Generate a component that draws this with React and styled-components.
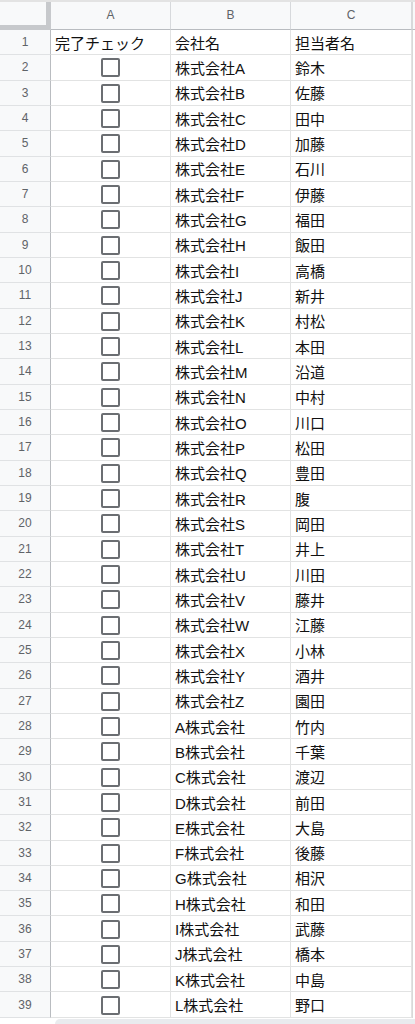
import React from "react";
import styled, { createGlobalStyle } from "styled-components";

const Global = createGlobalStyle`
  html, body { margin: 0; padding: 0; background: #fff; overflow: hidden; }
  body { font-family: "Liberation Sans", "Noto Sans CJK JP", sans-serif; }
`;

const Sheet = styled.div`
  width: 415px;
  height: 1024px;
  display: flex;
  flex-direction: column;
  overflow: hidden;
  border-top: 2px solid #e3e3e3;
  box-sizing: border-box;
`;

const Row = styled.div`
  display: grid;
  grid-template-columns: 51px 120px 120px 121px 1fr;
  height: ${(p) => (p.$header ? "28px" : "25.333px")};
  flex: none;
`;

const Corner = styled.div`
  background: #f8f9fa;
  border-right: 5px solid #c7c9cc;
  border-bottom: 5px solid #c7c9cc;
  box-sizing: border-box;
`;

const ColHead = styled.div`
  background: #f8f9fa;
  border-right: 1px solid #d7d9dc;
  border-bottom: 1px solid #b9bcc0;
  box-sizing: border-box;
  display: flex;
  align-items: center;
  justify-content: center;
  font-size: 12px;
  color: #5f6368;
  padding-bottom: 2px;
`;

const RowHead = styled.div`
  background: #f8f9fa;
  border-right: 1px solid #b9bcc0;
  border-bottom: 1px solid #e0e2e4;
  box-sizing: border-box;
  display: flex;
  align-items: center;
  justify-content: center;
  font-size: 12px;
  color: #5f6368;
`;

const Cell = styled.div`
  border-right: 1px solid #e2e3e3;
  border-bottom: 1px solid #e2e3e3;
  box-sizing: border-box;
  display: flex;
  align-items: center;
  justify-content: ${(p) => (p.$center ? "center" : "flex-start")};
  padding-left: ${(p) => (p.$center ? "0" : "4px")};
  font-family: "Liberation Sans", "Noto Sans CJK JP", sans-serif;
  font-size: 15px;
  color: #111;
  white-space: nowrap;
  overflow: hidden;
`;

const Rest = styled.div`
  background: ${(p) => (p.$header ? "#f8f9fa" : "#fff")};
  border-left: 1px solid #d9d9d9;
  border-bottom: ${(p) => (p.$header ? "1px solid #b9bcc0" : "none")};
  box-sizing: border-box;
`;

const Box = styled.span`
  width: 15px;
  height: 15px;
  border: 2px solid #6b6e72;
  border-radius: 2px;
  box-sizing: content-box;
  margin-top: 1px;
`;

const Footer = styled.div`
  flex: 1;
  display: flex;
  padding-left: 55px;
  padding-top: 1px;
`;

const Scroll = styled.div`
  flex: 1;
  background: #e9ebee;
  border-top-left-radius: 6px;
`;

const names1 = ["鈴木","佐藤","田中","加藤","石川","伊藤","福田","飯田","高橋","新井","村松","本田","沿道","中村","川口","松田","豊田","腹","岡田","井上","川田","藤井","江藤","小林","酒井","園田"];
const names2 = ["竹内","千葉","渡辺","前田","大島","後藤","相沢","和田","武藤","橋本","中島","野口"];
const letters = "ABCDEFGHIJKLMNOPQRSTUVWXYZ";

const data = [
  ...names1.map((n, i) => ({ company: `株式会社${letters[i]}`, person: n })),
  ...names2.map((n, i) => ({ company: `${letters[i]}株式会社`, person: n })),
];

export default function App() {
  return (
    <>
      <Global />
      <Sheet>
        <Row $header>
          <Corner />
          <ColHead>A</ColHead>
          <ColHead>B</ColHead>
          <ColHead>C</ColHead>
          <Rest $header />
        </Row>
        <Row>
          <RowHead>1</RowHead>
          <Cell>完了チェック</Cell>
          <Cell>会社名</Cell>
          <Cell>担当者名</Cell>
          <Rest />
        </Row>
        {data.map((d, i) => (
          <Row key={i}>
            <RowHead>{i + 2}</RowHead>
            <Cell $center>
              <Box />
            </Cell>
            <Cell>{d.company}</Cell>
            <Cell>{d.person}</Cell>
            <Rest />
          </Row>
        ))}
        <Footer>
          <Scroll />
        </Footer>
      </Sheet>
    </>
  );
}
